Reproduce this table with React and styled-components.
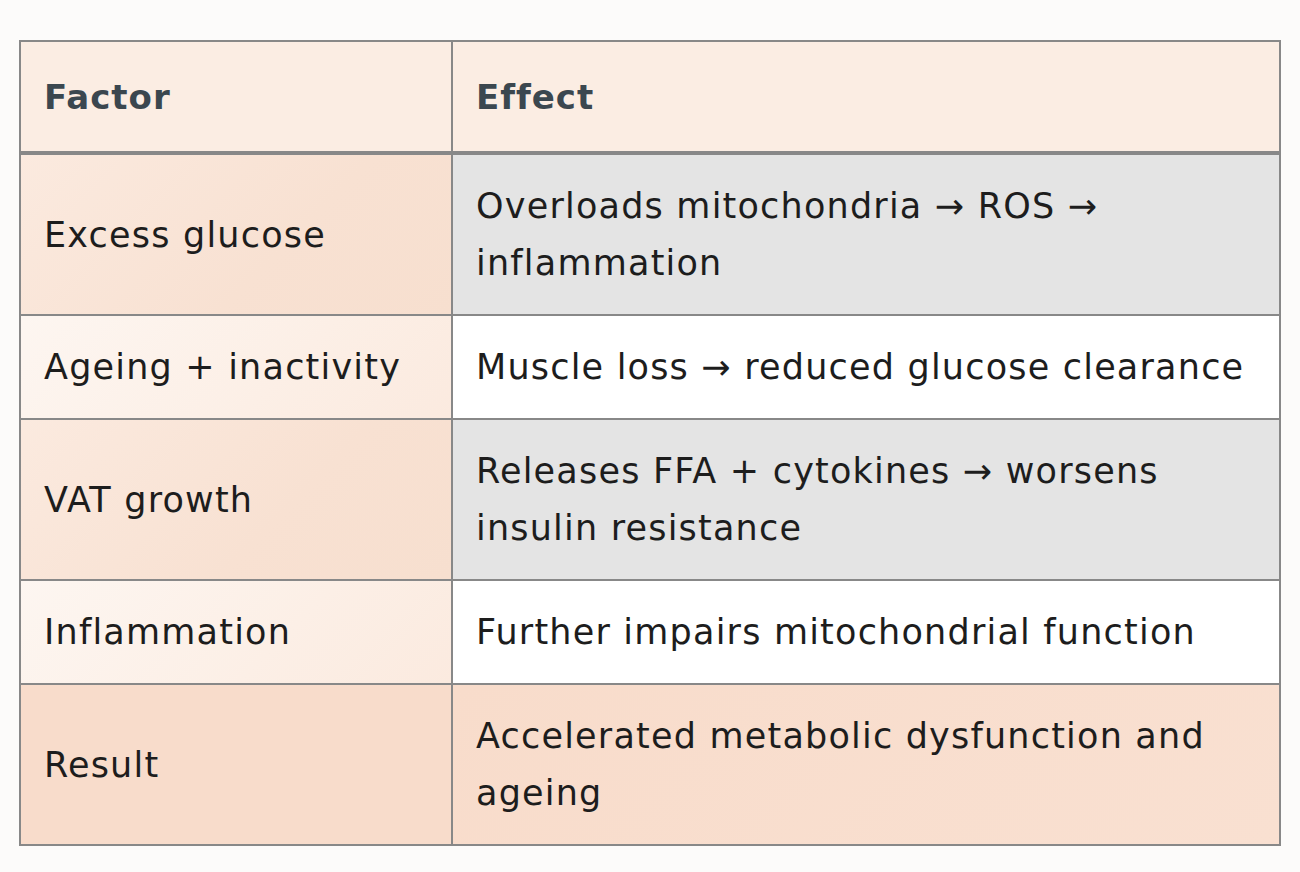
import React from "react";
import styled, { createGlobalStyle } from "styled-components";

const GlobalStyle = createGlobalStyle`
  html, body {
    margin: 0;
    padding: 0;
    background: #fcfbfa;
  }
  body {
    font-family: "DejaVu Sans", "Noto Sans", sans-serif;
  }
`;

const Page = styled.div`
  width: 1300px;
  height: 872px;
  padding: 40px 19px 0 19px;
  box-sizing: border-box;
  background: #fcfbfa;
`;

const Table = styled.table`
  width: 100%;
  border-collapse: collapse;
  border: 2px solid #888;
  table-layout: fixed;
`;

const HeadCell = styled.th`
  text-align: left;
  font-weight: 700;
  font-size: 34px;
  letter-spacing: 1px;
  line-height: 57px;
  color: #3b474f;
  padding: 27px 23px 25px;
  background: #fbede3;
  border: 2px solid #888;
  border-bottom: 4px solid #888;
`;

const leftBg = {
  strong: "linear-gradient(135deg, #fbeadf 0%, #f8e1d2 60%, #f7dfcf 100%)",
  light: "linear-gradient(135deg, #fdf6f1 0%, #fcefe6 60%, #fbeadf 100%)",
  result: "linear-gradient(135deg, #f8dccb 0%, #f8dccb 100%)",
};

const rightBg = {
  grey: "#e4e4e4",
  white: "#ffffff",
  result: "linear-gradient(135deg, #f8dccb 0%, #f9e0d1 100%)",
};

const FactorCell = styled.td`
  font-size: 35px;
  letter-spacing: 1.2px;
  line-height: 57px;
  color: #1d1d1d;
  padding: 23px 23px 22px;
  border: 2px solid #888;
  background: ${(p) => leftBg[p.$tone]};
  vertical-align: middle;
  white-space: nowrap;
`;

const EffectCell = styled.td`
  font-size: 35px;
  letter-spacing: 1.2px;
  line-height: 57px;
  color: #1d1d1d;
  padding: 23px 23px 22px;
  border: 2px solid #888;
  background: ${(p) => rightBg[p.$tone]};
  vertical-align: middle;
  white-space: nowrap;
`;

const rows = [
  {
    factor: "Excess glucose",
    effect: ["Overloads mitochondria → ROS →", "inflammation"],
    left: "strong",
    right: "grey",
  },
  {
    factor: "Ageing + inactivity",
    effect: ["Muscle loss → reduced glucose clearance"],
    left: "light",
    right: "white",
  },
  {
    factor: "VAT growth",
    effect: ["Releases FFA + cytokines → worsens", "insulin resistance"],
    left: "strong",
    right: "grey",
  },
  {
    factor: "Inflammation",
    effect: ["Further impairs mitochondrial function"],
    left: "light",
    right: "white",
  },
  {
    factor: "Result",
    effect: ["Accelerated metabolic dysfunction and", "ageing"],
    left: "result",
    right: "result",
  },
];

export default function App() {
  return (
    <>
      <GlobalStyle />
      <Page>
        <Table>
          <colgroup>
            <col style={{ width: "432px" }} />
            <col />
          </colgroup>
          <thead>
            <tr>
              <HeadCell>Factor</HeadCell>
              <HeadCell>Effect</HeadCell>
            </tr>
          </thead>
          <tbody>
            {rows.map((row) => (
              <tr key={row.factor}>
                <FactorCell $tone={row.left}>{row.factor}</FactorCell>
                <EffectCell $tone={row.right}>
                  {row.effect.map((line, i) => (
                    <React.Fragment key={i}>
                      {i > 0 && <br />}
                      {line}
                    </React.Fragment>
                  ))}
                </EffectCell>
              </tr>
            ))}
          </tbody>
        </Table>
      </Page>
    </>
  );
}
